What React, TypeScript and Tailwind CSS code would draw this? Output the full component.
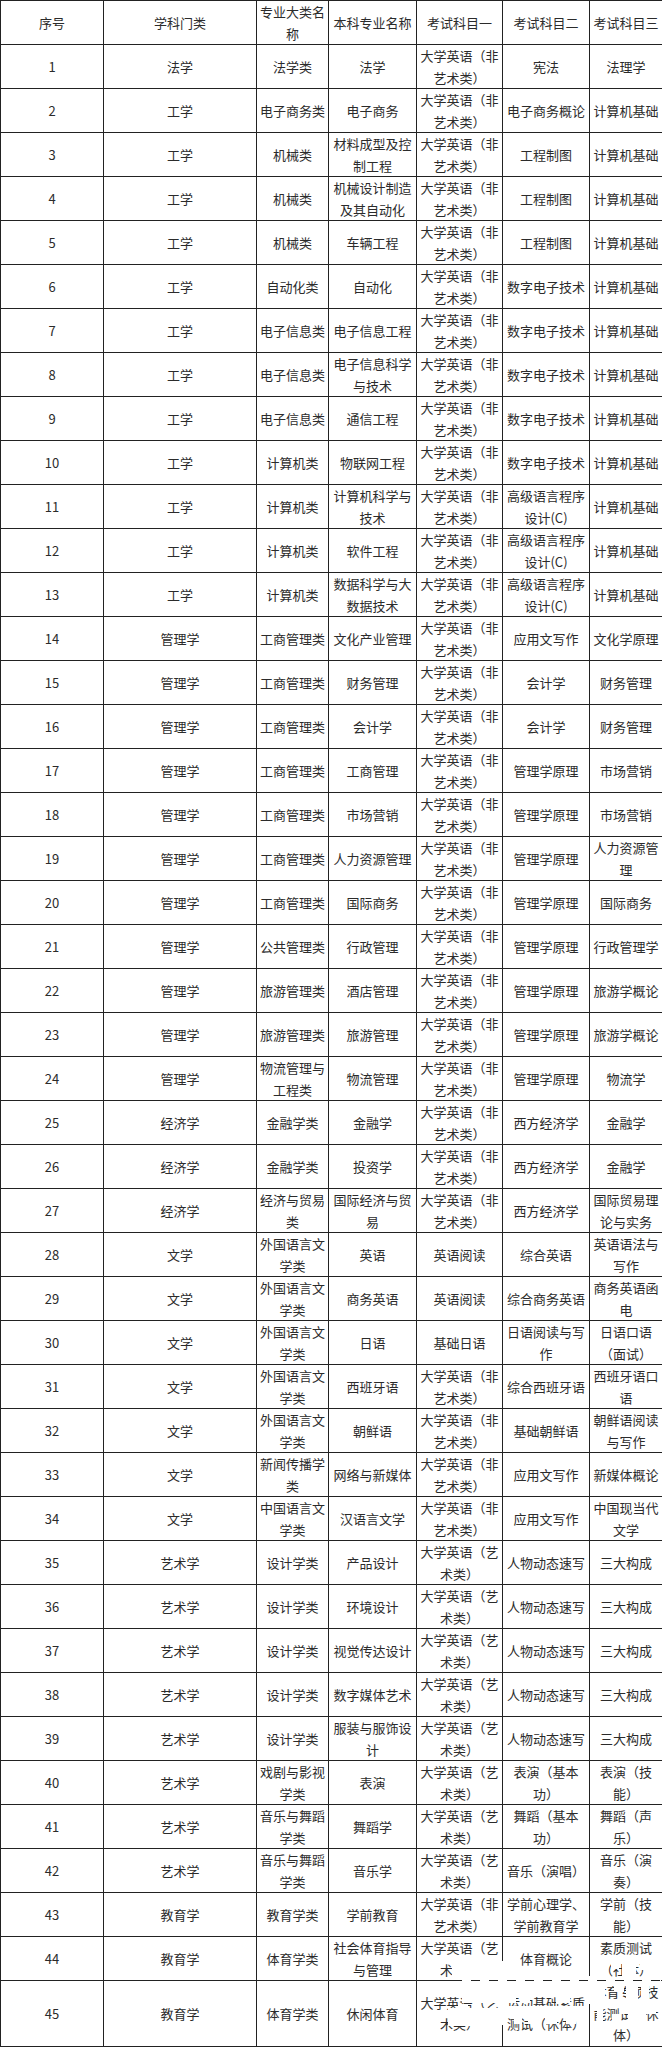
import React from "react";

const E1 = "大学英语（非艺术类）";
const E2 = "大学英语（艺术类）";

const rows: string[][] = [
  ["1", "法学", "法学类", "法学", E1, "宪法", "法理学"],
  ["2", "工学", "电子商务类", "电子商务", E1, "电子商务概论", "计算机基础"],
  ["3", "工学", "机械类", "材料成型及控制工程", E1, "工程制图", "计算机基础"],
  ["4", "工学", "机械类", "机械设计制造及其自动化", E1, "工程制图", "计算机基础"],
  ["5", "工学", "机械类", "车辆工程", E1, "工程制图", "计算机基础"],
  ["6", "工学", "自动化类", "自动化", E1, "数字电子技术", "计算机基础"],
  ["7", "工学", "电子信息类", "电子信息工程", E1, "数字电子技术", "计算机基础"],
  ["8", "工学", "电子信息类", "电子信息科学与技术", E1, "数字电子技术", "计算机基础"],
  ["9", "工学", "电子信息类", "通信工程", E1, "数字电子技术", "计算机基础"],
  ["10", "工学", "计算机类", "物联网工程", E1, "数字电子技术", "计算机基础"],
  ["11", "工学", "计算机类", "计算机科学与技术", E1, "高级语言程序设计(C)", "计算机基础"],
  ["12", "工学", "计算机类", "软件工程", E1, "高级语言程序设计(C)", "计算机基础"],
  ["13", "工学", "计算机类", "数据科学与大数据技术", E1, "高级语言程序设计(C)", "计算机基础"],
  ["14", "管理学", "工商管理类", "文化产业管理", E1, "应用文写作", "文化学原理"],
  ["15", "管理学", "工商管理类", "财务管理", E1, "会计学", "财务管理"],
  ["16", "管理学", "工商管理类", "会计学", E1, "会计学", "财务管理"],
  ["17", "管理学", "工商管理类", "工商管理", E1, "管理学原理", "市场营销"],
  ["18", "管理学", "工商管理类", "市场营销", E1, "管理学原理", "市场营销"],
  ["19", "管理学", "工商管理类", "人力资源管理", E1, "管理学原理", "人力资源管理"],
  ["20", "管理学", "工商管理类", "国际商务", E1, "管理学原理", "国际商务"],
  ["21", "管理学", "公共管理类", "行政管理", E1, "管理学原理", "行政管理学"],
  ["22", "管理学", "旅游管理类", "酒店管理", E1, "管理学原理", "旅游学概论"],
  ["23", "管理学", "旅游管理类", "旅游管理", E1, "管理学原理", "旅游学概论"],
  ["24", "管理学", "物流管理与工程类", "物流管理", E1, "管理学原理", "物流学"],
  ["25", "经济学", "金融学类", "金融学", E1, "西方经济学", "金融学"],
  ["26", "经济学", "金融学类", "投资学", E1, "西方经济学", "金融学"],
  ["27", "经济学", "经济与贸易类", "国际经济与贸易", E1, "西方经济学", "国际贸易理论与实务"],
  ["28", "文学", "外国语言文学类", "英语", "英语阅读", "综合英语", "英语语法与写作"],
  ["29", "文学", "外国语言文学类", "商务英语", "英语阅读", "综合商务英语", "商务英语函电"],
  ["30", "文学", "外国语言文学类", "日语", "基础日语", "日语阅读与写作", "日语口语（面试）"],
  ["31", "文学", "外国语言文学类", "西班牙语", E1, "综合西班牙语", "西班牙语口语"],
  ["32", "文学", "外国语言文学类", "朝鲜语", E1, "基础朝鲜语", "朝鲜语阅读与写作"],
  ["33", "文学", "新闻传播学类", "网络与新媒体", E1, "应用文写作", "新媒体概论"],
  ["34", "文学", "中国语言文学类", "汉语言文学", E1, "应用文写作", "中国现当代文学"],
  ["35", "艺术学", "设计学类", "产品设计", E2, "人物动态速写", "三大构成"],
  ["36", "艺术学", "设计学类", "环境设计", E2, "人物动态速写", "三大构成"],
  ["37", "艺术学", "设计学类", "视觉传达设计", E2, "人物动态速写", "三大构成"],
  ["38", "艺术学", "设计学类", "数字媒体艺术", E2, "人物动态速写", "三大构成"],
  ["39", "艺术学", "设计学类", "服装与服饰设计", E2, "人物动态速写", "三大构成"],
  ["40", "艺术学", "戏剧与影视学类", "表演", E2, "表演（基本功）", "表演（技能）"],
  ["41", "艺术学", "音乐与舞蹈学类", "舞蹈学", E2, "舞蹈（基本功）", "舞蹈（声乐）"],
  ["42", "艺术学", "音乐与舞蹈学类", "音乐学", E2, "音乐（演唱）", "音乐（演奏）"],
  ["43", "教育学", "教育学类", "学前教育", E1, "学前心理学、学前教育学", "学前（技能）"],
  ["44", "教育学", "体育学类", "社会体育指导与管理", E2, "体育概论", "素质测试（社体）"],
  ["45", "教育学", "体育学类", "休闲体育", E2, "运动基础素质测试（休体）", "体育专项技能测试（休体）"],
];

const header = ["序号", "学科门类", "专业大类名称", "本科专业名称", "考试科目一", "考试科目二", "考试科目三"];

const cellCls =
  "border border-[#222] px-[2px] py-0 text-center align-middle leading-[21.5px] break-all";

// white blotches over the bottom-right corner (as in the reference)
const blots: [number, number, number, number][] = [
  // row 44 col5 line 2
  [452, 1961, 49, 18],
  // row 44 col6 small nicks
  [540, 1948, 6, 6],
  // row 44 col7 line 2
  [591, 1961, 16, 18],
  [611, 1961, 8, 8],
  [622, 1961, 14, 18],
  [640, 1961, 20, 9],
  // vertical borders hidden
  [501, 1961, 3, 64],
  [588, 1976, 3, 28],
  // row 45 col5
  [462, 1984, 39, 19],
  [448, 2008, 53, 18],
  [458, 2004, 10, 5],
  // row 45 col6
  [504, 1984, 27, 9],
  [504, 1993, 12, 10],
  [520, 1995, 10, 8],
  [545, 1984, 14, 9],
  [556, 1984, 14, 19],
  [504, 2006, 84, 10],
  [514, 2016, 8, 8],
  [528, 2016, 8, 8],
  [545, 2016, 12, 8],
  [566, 2016, 10, 8],
  // row 45 col7
  [591, 1984, 14, 19],
  [614, 1984, 10, 8],
  [626, 1984, 12, 19],
  [641, 1984, 8, 19],
  [597, 2006, 6, 18],
  [591, 2006, 6, 5],
  [612, 2014, 8, 8],
  [620, 2006, 32, 8],
  [628, 2014, 18, 9],
  [650, 2006, 6, 8],
];

export default function App() {
  return (
    <div
      className="relative w-[662px] bg-white text-[13px] text-[#2b2b2b]"
      style={{ fontFamily: '"Noto Sans CJK SC", "Noto Sans", sans-serif' }}
    >
      <table className="w-[662px] table-fixed border-collapse">
        <colgroup>
          <col className="w-[103px]" />
          <col className="w-[153px]" />
          <col className="w-[72px]" />
          <col className="w-[88px]" />
          <col className="w-[86px]" />
          <col className="w-[87px]" />
          <col className="w-[73px]" />
        </colgroup>
        <thead>
          <tr className="h-[44px]">
            {header.map((h, i) => (
              <th key={i} className={cellCls + " font-normal"}>
                {h}
              </th>
            ))}
          </tr>
        </thead>
        <tbody>
          {rows.map((r, i) => (
            <tr key={i} className="h-[44px]">
              {r.map((c, j) => (
                <td key={j} className={cellCls}>
                  {c}
                </td>
              ))}
            </tr>
          ))}
        </tbody>
      </table>
      {/* dashed gap in the row 44/45 border */}
      <div className="absolute left-[462px] top-[1978px] h-[4px] w-[199px] bg-[repeating-linear-gradient(90deg,#fff_0_9px,transparent_9px_18px)]" />
      {blots.map(([x, y, w, h], i) => (
        <div
          key={i}
          className="absolute bg-white"
          style={{ left: x, top: y, width: w, height: h }}
        />
      ))}
    </div>
  );
}
